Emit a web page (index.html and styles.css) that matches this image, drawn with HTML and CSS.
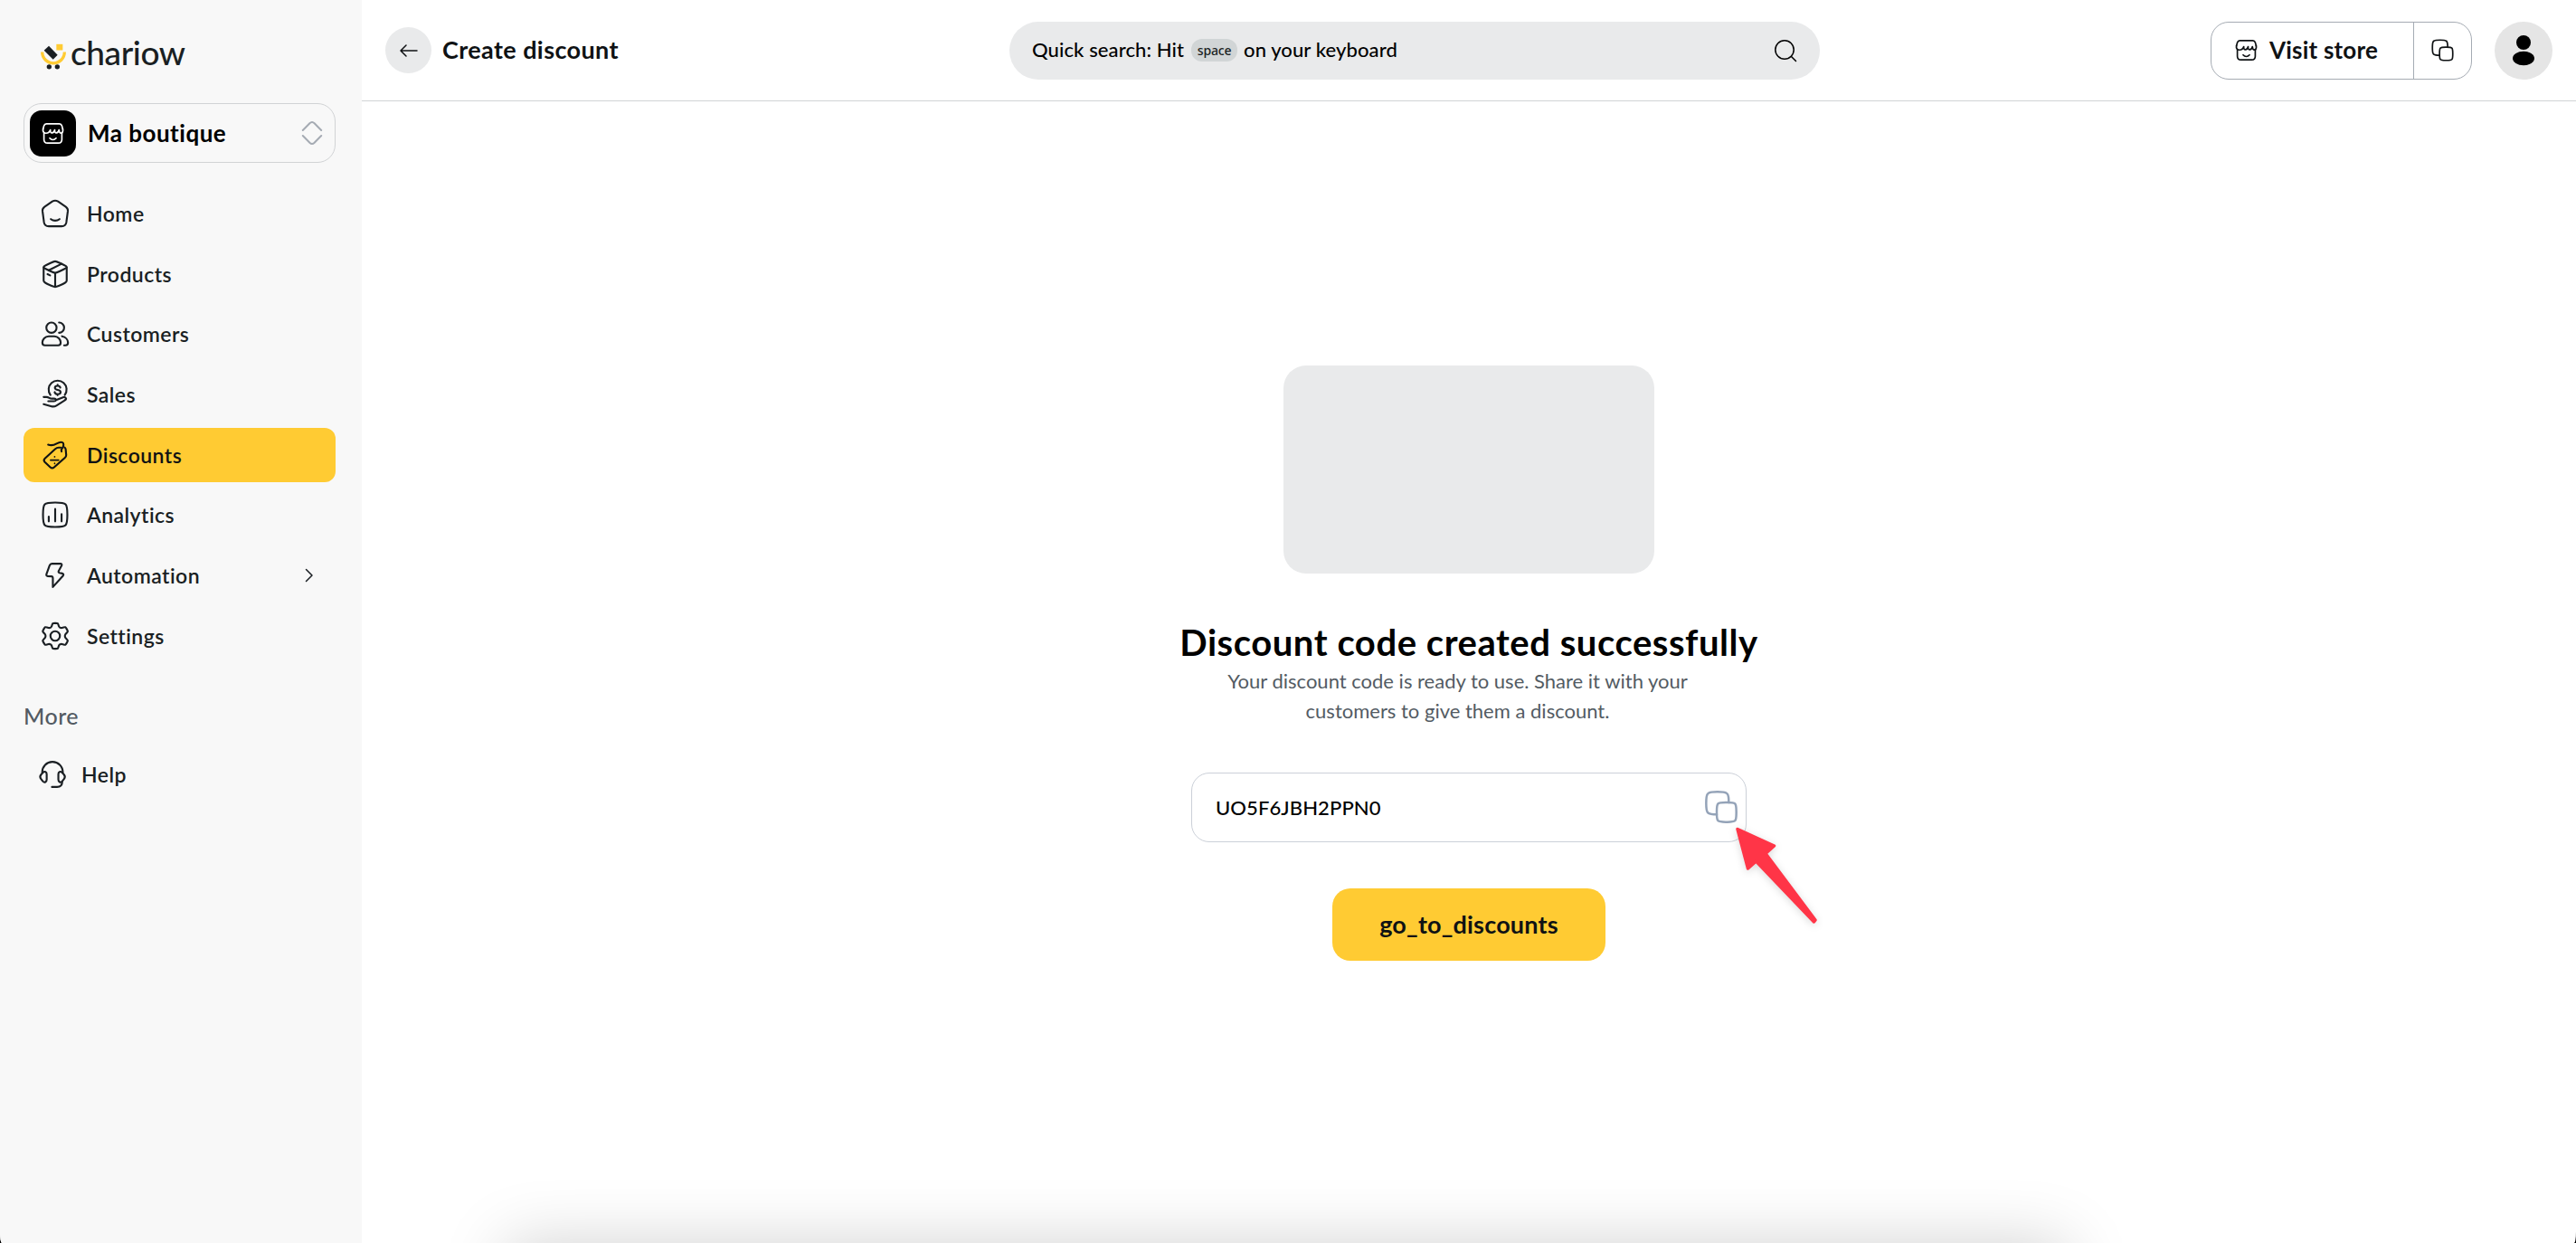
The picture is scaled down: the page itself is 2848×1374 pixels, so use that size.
FILE: index.html
```
<!DOCTYPE html>
<html lang="en">

<head>
    <meta charset="UTF-8">
    <meta name="viewport" content="width=device-width, initial-scale=1.0">
    <title>Chariow - Create discount</title>
    <link rel="stylesheet" href="styles.css">
</head>

<body>

    <!-- Shared icons -->
    <svg class="icon-defs" width="0" height="0">
        <symbol id="store" viewBox="0 0 24 24">
            <path d="M3.2 11.2V18c0 2.3 1.2 3.5 3.5 3.5h10.6c2.3 0 3.5-1.2 3.5-3.5v-6.8" />
            <path d="M2.3 7.7 3.2 4.4C3.6 3.1 4.3 2.5 5.6 2.5h12.8c1.3 0 2 .6 2.4 1.9l.9 3.3" />
            <path d="M2.3 7.7c-.5 2.2.9 4.1 2.9 4.1 2.2 0 3.8-1.6 4.3-3.3-.2 1.9.5 3 1.6 3 1.3 0 2.3-1.3 2.7-3-.2 1.9.5 3 1.6 3s2.2-1.3 2.6-3c.2 2 .8 3.2 2 3.2 1.4 0 2.1-1.8 1.7-4" />
            <path d="M8.9 16.6c1 1.2 2 1.6 3.1 1.6s2.1-.4 3.1-1.6" />
        </symbol>
        <symbol id="copy" viewBox="0 0 24 24">
            <path d="M9 15C9 12.1716 9 10.7574 9.87868 9.87868C10.7574 9 12.1716 9 15 9L16 9C18.8284 9 20.2426 9 21.1213 9.87868C22 10.7574 22 12.1716 22 15V16C22 18.8284 22 20.2426 21.1213 21.1213C20.2426 22 18.8284 22 16 22H15C12.1716 22 10.7574 22 9.87868 21.1213C9 20.2426 9 18.8284 9 16L9 15Z" />
            <path d="M16.9999 9C16.9975 6.04291 16.9528 4.51121 16.092 3.46243C15.9258 3.25989 15.7401 3.07418 15.5376 2.90796C14.4312 2 12.7875 2 9.5 2C6.21252 2 4.56878 2 3.46243 2.90796C3.25989 3.07417 3.07418 3.25989 2.90796 3.46243C2 4.56878 2 6.21252 2 9.5C2 12.7875 2 14.4312 2.90796 15.5376C3.07417 15.7401 3.25989 15.9258 3.46243 16.092C4.51121 16.9528 6.04291 16.9975 9 16.9999" />
        </symbol>
    </svg>

    <div class="app">

        <!-- Sidebar -->
        <aside class="sidebar">
            <a class="logo" href="#">
                <svg class="logo-mark" viewBox="135 143 84 86">
                    <path d="M140 171a37 37 0 0 0 74 0" fill="none" stroke="#ffcb33" stroke-width="10" />
                    <rect x="187" y="145" width="21" height="20" fill="#ffcb33" />
                    <path d="M146 166l16-15 29 30-15 15z" fill="#1a1f23" />
                    <circle cx="163" cy="220" r="8" fill="#1a1f23" />
                    <circle cx="190" cy="220" r="8" fill="#1a1f23" />
                </svg>
                <span class="logo-text">chariow</span>
            </a>

            <button class="store-select">
                <span class="store-tile"><svg class="icon"><use href="#store" /></svg></span>
                <span class="store-name">Ma boutique</span>
                <svg class="store-arrows" viewBox="0 0 24 28">
                    <path d="M1.8 11 9.4 3.3c1.8-1.7 3.4-1.7 5.2 0L22.2 11" />
                    <path d="M1.8 17l7.6 7.7c1.8 1.7 3.4 1.7 5.2 0L22.2 17" />
                </svg>
            </button>

            <nav class="menu">
                <a class="menu-item" href="#">
                    <svg class="icon" viewBox="0 0 24 24">
                        <path d="M9.8 2.6Q12 1.3 14.2 2.6L20.3 6.8Q22.1 8.1 21.9 10L20.7 19Q20.2 22 17 22H7Q3.8 22 3.3 19L2.1 10Q1.9 8.1 3.7 6.8Z" />
                        <path d="M8.6 16.4c1 .8 2.2 1.2 3.4 1.2s2.4-.4 3.4-1.2" />
                    </svg>
                    <span>Home</span>
                </a>
                <a class="menu-item" href="#">
                    <svg class="icon" viewBox="0 0 24 24">
                        <path d="M12 22C11.1818 22 10.4002 21.6698 8.83693 21.0095C4.94564 19.3657 3 18.5438 3 17.1613V7M12 22C12.8182 22 13.5998 21.6698 15.1631 21.0095C19.0544 19.3657 21 18.5438 21 17.1613V7M12 22V11.3548" />
                        <path d="M8.32592 9.69138L5.40472 8.27785C3.80157 7.5021 3 7.11423 3 6.5C3 5.88577 3.80157 5.4979 5.40472 4.72215L8.32592 3.30862C10.1288 2.43621 11.0303 2 12 2C12.9697 2 13.8712 2.4362 15.6741 3.30862L18.5953 4.72215C20.1984 5.4979 21 5.88577 21 6.5C21 7.11423 20.1984 7.5021 18.5953 8.27785L15.6741 9.69138C13.8712 10.5638 12.9697 11 12 11C11.0303 11 10.1288 10.5638 8.32592 9.69138Z" />
                        <path d="M6 12L8 13M17 4L7 9" />
                    </svg>
                    <span>Products</span>
                </a>
                <a class="menu-item" href="#">
                    <svg class="icon" viewBox="0 0 24 24">
                        <circle cx="9.1" cy="7.2" r="4" />
                        <path d="M15 3.2a4 4 0 0 1 0 8" />
                        <path d="M7 13.9h4.3c3 0 5 2.5 5 5 0 1.2-.8 2.1-2 2.1H4c-1.2 0-2-.9-2-2.1 0-2.5 2-5 5-5z" />
                        <path d="M17.3 13.9c2.9.6 4.7 2.8 4.7 5 0 1.2-.8 2.1-2 2.1h-1" />
                    </svg>
                    <span>Customers</span>
                </a>
                <a class="menu-item" href="#">
                    <svg class="icon" viewBox="0 0 24 24">
                        <path d="M8.3 12.4a7 7 0 1 1 11.2 0" />
                        <path d="M16 6.7c-.2-.9-1-1.4-2.1-1.4-1.3 0-2.1.6-2.1 1.6 0 2.2 4.4 1 4.4 3.3 0 1-.9 1.6-2.3 1.6-1.2 0-2.1-.6-2.3-1.6M13.9 4.4v.9M13.9 11.8v.8" />
                        <path d="M3 14h2.2c.8 0 1.5.3 2.2.7.7.5 1.5.6 2.3.6h1.5c1 0 1.5.5 1.4 1.1-.2.7-.8.9-1.6.9H6.6" />
                        <path d="M12.6 16.4l6-2.2c1.2-.4 2.4.8 1.7 1.7-.3.4-.7.7-1.2 1l-6.1 3.8c-1.3.8-2.4 1-3.8.6L3 19.6" />
                    </svg>
                    <span>Sales</span>
                </a>
                <a class="menu-item active" href="#">
                    <svg class="icon" viewBox="0 0 24 24">
                        <path d="M16.3 6.2h-1.6c-1 0-1.8.3-2.6 1L4 14.6c-1 1-1 1.9-.1 2.9l4.3 4c1 .9 2 .9 3 0l8.4-7.4c.8-.7 1.1-1.4 1-2.4l-.4-4.2c-.1-.9-.3-1.1-.8-1.4" />
                        <path d="M6.5 3.9c2.4.9 4.6.4 6.6-.8 2-1.1 3.6-1.4 4.6-.9 1.2.6 1 2.8 0 4.2-.9 1-1.2 1.7-.7 2.8" />
                        <path class="thin" d="M8.400 15.900h6.300M11.600 13.300v.1M11.600 18.500v.1" />
                    </svg>
                    <span>Discounts</span>
                </a>
                <a class="menu-item" href="#">
                    <svg class="icon" viewBox="0 0 24 24">
                        <path d="M2.5 12C2.5 7.52166 2.5 5.28249 3.89124 3.89124C5.28249 2.5 7.52166 2.5 12 2.5C16.4783 2.5 18.7175 2.5 20.1088 3.89124C21.5 5.28249 21.5 7.52166 21.5 12C21.5 16.4783 21.5 18.7175 20.1088 20.1088C18.7175 21.5 16.4783 21.5 12 21.5C7.52166 21.5 5.28249 21.5 3.89124 20.1088C2.5 18.7175 2.5 16.4783 2.5 12Z" />
                        <path d="M7 13.5v3.7M12 7.5v9.7M17 11.5v5.7" />
                    </svg>
                    <span>Analytics</span>
                </a>
                <a class="menu-item" href="#">
                    <svg class="icon" viewBox="0 0 24 24">
                        <path d="M9.5 2.9h6.6c1 0 1.3.7.9 1.5l-2.3 4.2c-.3.7 0 1.2.7 1.4l2.1.5c1 .3 1.3 1.1.6 1.900l-7.9 8.7v-7.2c0-.7-.3-1-1-1.1l-3-.2c-.9-.1-1.3-.7-1-1.5l2.500-6.900c.3-.8.8-1.300 1.800-1.300z" />
                    </svg>
                    <span>Automation</span>
                    <svg class="chevron" viewBox="0 0 10 16"><path d="M1.5 1.5 8 8l-6.5 6.5" /></svg>
                </a>
                <a class="menu-item" href="#">
                    <svg class="icon" viewBox="0 0 24 24">
                        <circle cx="12" cy="12" r="3.7" />
                        <path d="M21.3175 7.14139L20.8239 6.28479C20.4506 5.63696 20.264 5.31305 19.9464 5.18388C19.6288 5.05472 19.2696 5.15664 18.5513 5.36048L17.3311 5.70418C16.8725 5.80994 16.3913 5.74994 15.9726 5.53479L15.6357 5.34042C15.2766 5.11043 15.0004 4.77133 14.8475 4.37274L14.5136 3.37536C14.294 2.71534 14.1842 2.38533 13.9228 2.19657C13.6615 2.00781 13.3143 2.00781 12.6199 2.00781H11.5051C10.8108 2.00781 10.4636 2.00781 10.2022 2.19657C9.94085 2.38533 9.83106 2.71534 9.61149 3.37536L9.27753 4.37274C9.12465 4.77133 8.84845 5.11043 8.48937 5.34042L8.15249 5.53479C7.73374 5.74994 7.25259 5.80994 6.79398 5.70418L5.57375 5.36048C4.85541 5.15664 4.49625 5.05472 4.17867 5.18388C3.86109 5.31305 3.67445 5.63696 3.30115 6.28479L2.80757 7.14139C2.45766 7.74864 2.2827 8.05227 2.31666 8.37549C2.35061 8.69871 2.58483 8.95918 3.05326 9.48012L4.0843 10.6328C4.3363 10.9518 4.51521 11.5078 4.51521 12.0077C4.51521 12.5078 4.33636 13.0636 4.08433 13.3827L3.05326 14.5354C2.58483 15.0564 2.35062 15.3168 2.31666 15.6401C2.2827 15.9633 2.45766 16.2669 2.80757 16.8741L3.30114 17.7307C3.67443 18.3785 3.86109 18.7025 4.17867 18.8316C4.49625 18.9608 4.85542 18.8589 5.57377 18.655L6.79394 18.3113C7.25263 18.2055 7.73387 18.2656 8.15267 18.4808L8.4895 18.6752C8.84851 18.9052 9.12464 19.2442 9.2775 19.6428L9.61149 20.6403C9.83106 21.3003 9.94085 21.6303 10.2022 21.8191C10.4636 22.0078 10.8108 22.0078 11.5051 22.0078H12.6199C13.3143 22.0078 13.6615 22.0078 13.9228 21.8191C14.1842 21.6303 14.294 21.3003 14.5136 20.6403L14.8476 19.6428C15.0004 19.2442 15.2765 18.9052 15.6356 18.6752L15.9724 18.4808C16.3912 18.2656 16.8724 18.2055 17.3311 18.3113L18.5513 18.655C19.2696 18.8589 19.6288 18.9608 19.9464 18.8316C20.264 18.7025 20.4506 18.3785 20.8239 17.7307L21.3175 16.8741C21.6674 16.2669 21.8423 15.9633 21.8084 15.6401C21.7744 15.3168 21.5402 15.0564 21.0718 14.5354L20.0407 13.3827C19.7887 13.0636 19.6098 12.5078 19.6098 12.0077C19.6098 11.5078 19.7888 10.9518 20.0407 10.6328L21.0718 9.48012C21.5402 8.95918 21.7744 8.69871 21.8084 8.37549C21.8423 8.05227 21.6674 7.74864 21.3175 7.14139Z" />
                    </svg>
                    <span>Settings</span>
                </a>
            </nav>

            <h2 class="menu-title">More</h2>
            <a class="menu-item help" href="#">
                <svg class="icon" viewBox="0 0 24 24">
                    <path d="M4 10.4C4 5.7 7.5 2.2 12 2.2s8.1 3.5 8.1 8.2" />
                    <path d="M7.5 11.9v4.2c0 1.8-1.7 2.7-3 1.3l-1.4-1.8c-1-1.2-1-2.2 0-3.4l1.4-1.6c1.4-1.4 3-.5 3 1.3z" />
                    <path d="M16.6 11.9v4.2c0 1.8 1.7 2.7 3 1.3l1.4-1.8c1-1.2 1-2.2 0-3.4l-1.4-1.6c-1.4-1.4-3-.5-3 1.3z" />
                    <path d="M19.6 17.8c0 2.5-1.4 4-4 4h-4" />
                </svg>
                <span>Help</span>
            </a>
        </aside>

        <div class="content">

            <!-- Top bar -->
            <header class="topbar">
                <div class="page-title">
                    <a class="back" href="#">
                        <svg viewBox="0 0 20 14"><path d="M19 7H1M7 1 1 7l6 6" /></svg>
                    </a>
                    <h1>Create discount</h1>
                </div>
                <div class="search">
                    <span>Quick search: Hit</span>
                    <kbd>space</kbd>
                    <span>on your keyboard</span>
                    <svg class="search-icon" viewBox="0 0 26 26">
                        <circle cx="12" cy="12" r="10.2" />
                        <path d="M19.5 19.5l5 5" />
                    </svg>
                </div>
                <div class="actions">
                    <div class="store-link">
                        <a class="visit" href="#"><svg class="icon"><use href="#store" /></svg><span>Visit store</span></a>
                        <button class="copy-link"><svg class="icon"><use href="#copy" /></svg></button>
                    </div>
                    <div class="avatar">
                        <svg viewBox="0 0 64 64">
                            <circle cx="32" cy="23" r="8" />
                            <ellipse cx="32" cy="40.5" rx="12" ry="7.7" />
                        </svg>
                    </div>
                </div>
            </header>

            <!-- Success message -->
            <main class="success">
                <div class="preview"></div>
                <h2>Discount code created successfully</h2>
                <p>Your discount code is ready to use. Share it with your customers to give them a discount.</p>
                <div class="code-box">
                    <span>UO5F6JBH2PPN0</span>
                    <button class="copy-code"><svg class="icon"><use href="#copy" /></svg></button>
                    <svg class="pointer" viewBox="0 0 100 114">
                        <path d="M6 4.5 46.5 23 37 31.5 92 105l-1.5 2L26.5 40l-9 8z" />
                    </svg>
                </div>
                <a class="btn" href="#">go_to_discounts</a>
            </main>

        </div>

        <div class="bottom-shadow"></div>
    </div>

</body>

</html>
```
FILE: styles.css
```
* {
    box-sizing: border-box;
}

body {
    margin: 0;
    background-color: #000;
    font-family: Lato, "Open Sans", sans-serif;
    color: #0f1214;
}

a {
    color: inherit;
    text-decoration: none;
}

button {
    margin: 0;
    padding: 0;
    border: none;
    background: none;
    font: inherit;
    color: inherit;
}

h1,
h2,
p {
    margin: 0;
}

svg {
    display: block;
    flex-shrink: 0;
    fill: none;
    stroke: currentColor;
    stroke-width: 1.5;
    stroke-linecap: round;
    stroke-linejoin: round;
}

.icon-defs {
    position: absolute;
}

.app {
    position: relative;
    display: flex;
    height: 1374px;
    overflow: hidden;
    background-color: #fff;
    border-radius: 0 0 2px 2px / 0 0 12px 12px;
}

/* Sidebar */
.sidebar {
    width: 400px;
    padding: 27px 29px 0 26px;
    background-color: #f8f8f8;
    color: #1a1f23;
}

.logo {
    display: flex;
    align-items: center;
    gap: 5px;
    height: 62px;
    padding-left: 19px;
}

.logo-mark {
    width: 28px;
    height: 29px;
    margin-top: 8px;
    stroke: none;
}

.logo-mark path {
    stroke-linecap: butt;
}

.logo-text {
    font-size: 37px;
    font-weight: 500;
    letter-spacing: -0.4px;
    line-height: 60px;
}

.store-select {
    display: flex;
    align-items: center;
    width: 345px;
    height: 66px;
    margin-top: 25px;
    padding: 0 13px 0 6px;
    border: 1px solid #d1d3d5;
    border-radius: 20px;
    color: #000;
}

.store-tile {
    display: flex;
    align-items: center;
    justify-content: center;
    width: 51px;
    height: 51px;
    border-radius: 13px;
    background-color: #000;
    color: #fff;
}

.store-tile .icon {
    width: 27px;
    height: 27px;
}

.store-name {
    margin-left: 13px;
    font-size: 26px;
    font-weight: 700;
    letter-spacing: 0.5px;
}

.store-arrows {
    width: 24px;
    height: 28px;
    margin-left: auto;
    color: #a5abb3;
    stroke-width: 2;
}

.menu {
    display: flex;
    flex-direction: column;
    gap: 6.67px;
    margin-top: 26px;
}

.menu-item {
    display: flex;
    align-items: center;
    gap: 18px;
    width: 345px;
    height: 60px;
    padding: 0 24px 0 18px;
    border-radius: 12px;
    font-size: 23px;
    font-weight: 600;
    letter-spacing: 0.45px;
}

.menu-item .icon {
    width: 34px;
    height: 34px;
}

.menu-item .thin {
    stroke-width: 1.2;
}

.menu-item.active {
    background-color: #ffcb33;
    color: #0f1214;
}

.menu-item .chevron {
    width: 10px;
    height: 16px;
    margin-left: auto;
}

.menu-title {
    margin-top: 42px;
    font-size: 25px;
    font-weight: 500;
    letter-spacing: 0.5px;
    line-height: 32px;
    color: #535b63;
}

.menu-item.help {
    margin-top: 19px;
    gap: 15px;
    padding-left: 15px;
}

/* Top bar */
.content {
    flex: 1;
}

.topbar {
    display: flex;
    align-items: center;
    height: 112px;
    padding: 0 26px;
    border-bottom: 1px solid #d1d3d5;
}

.page-title {
    display: flex;
    align-items: center;
    gap: 12px;
    width: 690px;
}

.page-title h1 {
    padding-bottom: 2px;
    font-size: 27px;
    font-weight: 700;
    letter-spacing: 0.4px;
}

.back {
    display: flex;
    align-items: center;
    justify-content: center;
    width: 51px;
    height: 51px;
    border-radius: 50%;
    background-color: #e9eaeb;
}

.back svg {
    width: 20px;
    height: 14px;
}

.search {
    display: flex;
    align-items: center;
    width: 896px;
    height: 64px;
    padding: 0 25px;
    border-radius: 32px;
    background-color: #e9eaeb;
    font-size: 22px;
    font-weight: 500;
    letter-spacing: 0.1px;
    color: #000;
}

.search span {
    padding-bottom: 2px;
}

.search kbd {
    width: 51px;
    margin: 0 7px 0 8px;
    border-radius: 12px;
    background-color: #d1d5d6;
    font-family: "Noto Sans", sans-serif;
    font-size: 14px;
    font-weight: 500;
    letter-spacing: -0.2px;
    line-height: 25px;
    text-align: center;
    color: #1a1f23;
}

.search-icon {
    width: 26px;
    height: 26px;
    margin-left: auto;
}

.actions {
    display: flex;
    gap: 25px;
    margin-left: auto;
}

.store-link {
    display: flex;
    height: 64px;
    border: 1px solid #a5abb3;
    border-radius: 20px;
}

.store-link .icon {
    width: 27px;
    height: 27px;
}

.visit {
    display: flex;
    align-items: center;
    gap: 12px;
    width: 224px;
    padding-left: 25px;
    border-right: 1px solid #a5abb3;
    font-size: 26px;
    font-weight: 700;
    letter-spacing: 0.2px;
}

.visit span {
    padding-bottom: 1px;
}

.copy-link {
    display: flex;
    align-items: center;
    justify-content: center;
    width: 63px;
}

.avatar {
    width: 64px;
    height: 64px;
    border-radius: 50%;
    background-color: #e5e5e5;
}

.avatar svg {
    fill: #000;
    stroke: none;
}

/* Success message */
.success {
    display: flex;
    flex-direction: column;
    align-items: center;
    padding-top: 292px;
}

.preview {
    width: 410px;
    height: 230px;
    border-radius: 25px;
    background-color: #e9eaeb;
}

.success h2 {
    margin-top: 51px;
    font-size: 40px;
    font-weight: 700;
    letter-spacing: 0.55px;
    line-height: 50px;
    color: #000;
}

.success p {
    width: 574px;
    margin-top: 1px;
    padding-right: 25px;
    font-size: 22px;
    font-weight: 400;
    line-height: 33.3px;
    text-align: center;
    color: #535b63;
}

.code-box {
    position: relative;
    display: flex;
    align-items: center;
    justify-content: space-between;
    width: 614px;
    height: 77px;
    margin-top: 51px;
    padding: 0 7px 0 26px;
    border: 1px solid #cbd0d8;
    border-radius: 20px;
    font-size: 22px;
    font-weight: 500;
    letter-spacing: 0.1px;
    color: #000;
}

.copy-code {
    color: #94a3b8;
}

.copy-code .icon {
    width: 40px;
    height: 40px;
}

.pointer {
    position: absolute;
    top: 57px;
    left: 597px;
    width: 100px;
    height: 114px;
    fill: #ff3547;
    stroke: #ff3547;
    stroke-width: 3.5;
    filter: drop-shadow(0 2px 4px rgba(0, 0, 0, 0.15));
}

.btn {
    width: 302px;
    margin-top: 51px;
    border-radius: 20px;
    background-color: #ffcb33;
    font-size: 27px;
    font-weight: 700;
    letter-spacing: 0.2px;
    line-height: 80px;
    text-align: center;
}

/* Soft shade along the bottom edge */
.bottom-shadow {
    position: absolute;
    top: 1374px;
    left: 560px;
    width: 1725px;
    height: 200px;
    box-shadow: 0 0 72px rgba(0, 0, 0, 0.18);
}
```
